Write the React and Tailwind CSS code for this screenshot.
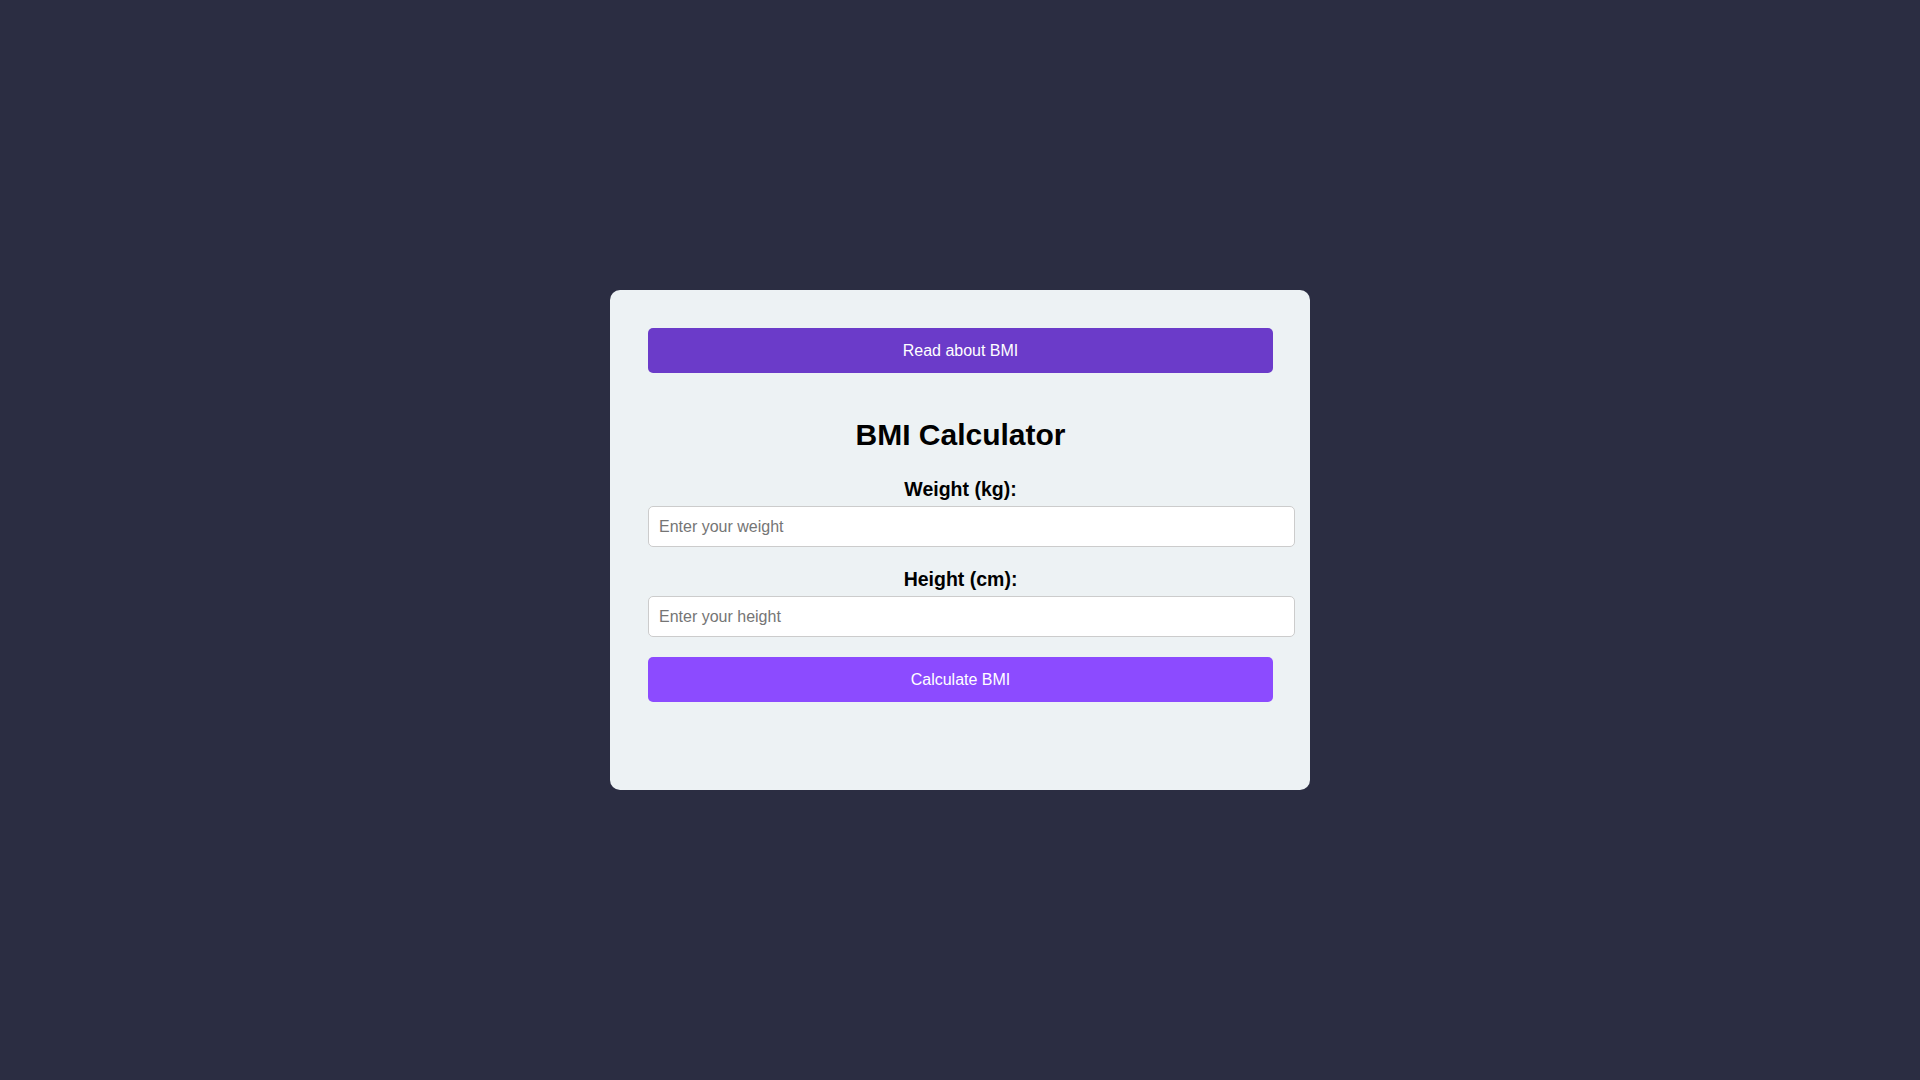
// BMI calculator card, centred on a dark page
export default function App() {
  return (
    <div className="flex min-h-screen items-center justify-center bg-[#2b2d42] font-['Liberation_Sans',Arial,sans-serif]">
      <div className="flex h-[500px] w-[700px] flex-col rounded-[10px] bg-[#edf2f4] py-[38px] pl-[38px] pr-[37px]">
        <button className="h-[45px] w-full rounded-[5px] bg-[#6b3bc9] text-[16px] text-white">
          Read about BMI
        </button>

        <h1 className="mt-[45px] text-center text-[30px] font-bold leading-[34px] text-black">BMI Calculator</h1>

        <label className="mt-[26px] block text-center text-[19.5px] font-bold leading-[22px] text-black">Weight (kg):</label>
        <input
          type="number"
          placeholder="Enter your weight"
          className="mt-[6px] h-[41px] w-[647px] rounded-[5px] border border-[#cccccc] bg-white px-[10px] text-[16px] outline-none placeholder:text-[#757575]"
        />

        <label className="mt-[21px] block text-center text-[19.5px] font-bold leading-[22px] text-black">Height (cm):</label>
        <input
          type="number"
          placeholder="Enter your height"
          className="mt-[6px] h-[41px] w-[647px] rounded-[5px] border border-[#cccccc] bg-white px-[10px] text-[16px] outline-none placeholder:text-[#757575]"
        />

        <button className="mt-[20px] h-[45px] w-full rounded-[5px] bg-[#8c4bff] text-[16px] text-white">
          Calculate BMI
        </button>
      </div>
    </div>
  )
}
